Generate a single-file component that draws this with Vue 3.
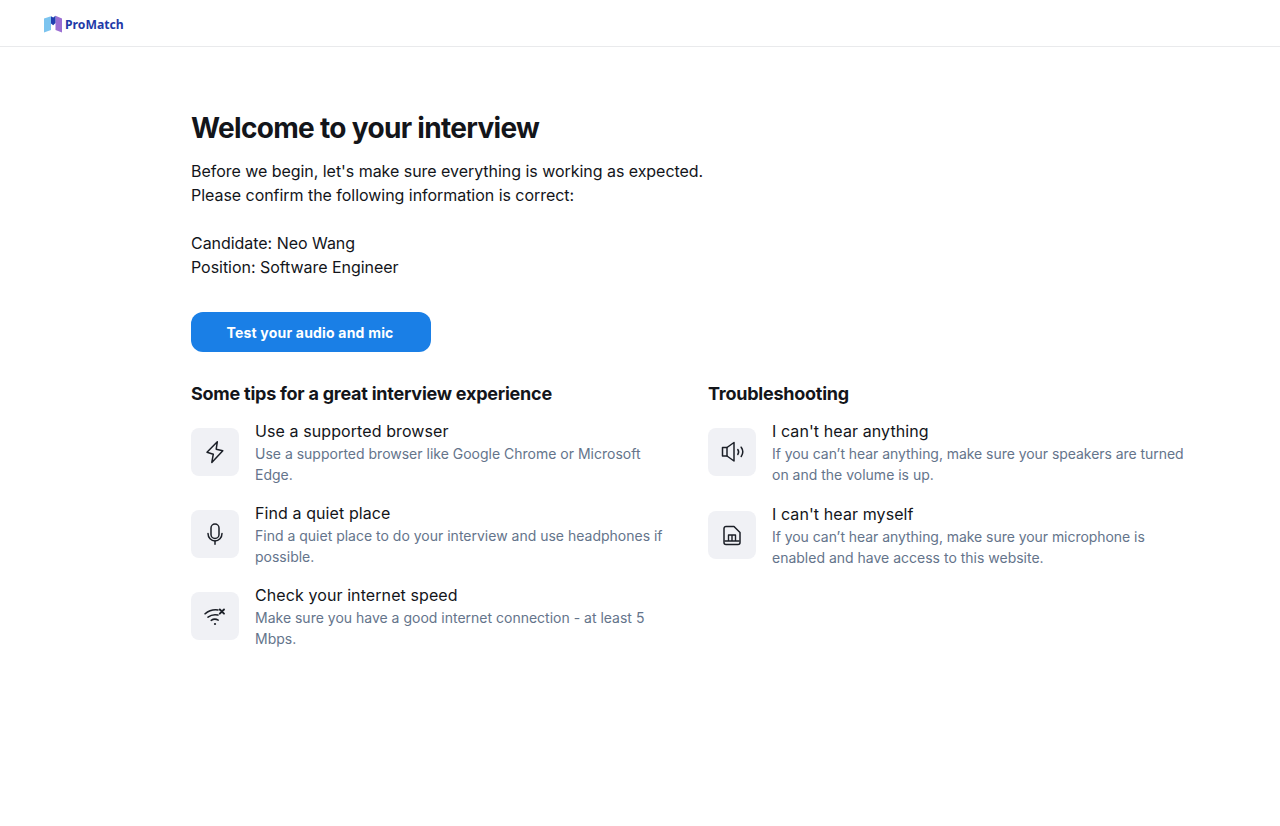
<script setup>
const tips = [
  { icon: 'bolt', title: 'Use a supported browser', text: 'Use a supported browser like Google Chrome or Microsoft Edge.' },
  { icon: 'mic', title: 'Find a quiet place', text: 'Find a quiet place to do your interview and use headphones if possible.' },
  { icon: 'wifi', title: 'Check your internet speed', text: 'Make sure you have a good internet connection - at least 5 Mbps.' }
]

const fixes = [
  { icon: 'speaker', title: "I can't hear anything", text: 'If you can’t hear anything, make sure your speakers are turned on and the volume is up.' },
  { icon: 'sim', title: "I can't hear myself", text: 'If you can’t hear anything, make sure your microphone is enabled and have access to this website.' }
]

const columns = [
  { heading: 'Some tips for a great interview experience', items: tips },
  { heading: 'Troubleshooting', items: fixes }
]
</script>

<template>
  <div class="page">
    <header class="topbar">
      <svg class="logo" width="18" height="18" viewBox="0 0 18 18">
        <path d="M0 3.5 L7 1.2 V15 L0 17.5 Z" fill="#7cc4ef" />
        <path d="M18 3.5 L11.5 0.8 V15 L18 17.5 Z" fill="#9b6fd3" />
        <path d="M7 1.2 L9.2 2.4 L11.5 0.8 V8 L9.2 10.2 L7 8.4 Z" fill="#1f3fb0" />
      </svg>
      <span class="brand">ProMatch</span>
    </header>

    <main class="content">
      <h1>Welcome to your interview</h1>
      <p class="intro">Before we begin, let's make sure everything is working as expected.<br />Please confirm the following information is correct:</p>
      <p class="intro details">Candidate: Neo Wang<br />Position: Software Engineer</p>
      <button class="test-btn">Test your audio and mic</button>

      <div class="columns">
        <section v-for="col in columns" :key="col.heading" class="column">
          <h2>{{ col.heading }}</h2>
          <div v-for="item in col.items" :key="item.title" class="item">
            <div class="icon-box">
              <svg width="24" height="24" viewBox="0 0 24 24" fill="none" stroke="#1b1f27" stroke-width="1.5" stroke-linecap="round" stroke-linejoin="round">
                <template v-if="item.icon === 'bolt'">
                  <path d="M14.3 1.8 L4 12.2 L10.3 14.2 L8.8 22.4 L19.8 10.8 L13.2 9.2 Z" />
                </template>
                <template v-else-if="item.icon === 'mic'">
                  <rect x="8" y="2" width="8" height="14.5" rx="4" />
                  <path d="M5 11.5 A7 7.5 0 0 0 19 11.5" />
                  <path d="M12 19 V22.2" />
                </template>
                <template v-else-if="item.icon === 'wifi'">
                  <path d="M2 9.8 C6 6.5 10.5 5.4 15 6" />
                  <path d="M5 13.2 C8 10.8 11.5 10.2 15 11" />
                  <path d="M8.2 16.4 C10.2 15 13 14.8 15.2 16.2" />
                  <path d="M12 20 H12.01" stroke-width="2.2" />
                  <path d="M16.8 5.5 L21 9.7 M21 5.5 L16.8 9.7" stroke-width="1.9" />
                </template>
                <template v-else-if="item.icon === 'speaker'">
                  <path d="M2.5 7.5 H7 L14 2.5 V21 L7 16 H2.5 Z" />
                  <path d="M7 7.5 V16" />
                  <path d="M17.8 9.5 C18.8 11 18.8 13 17.8 14.5" />
                  <path d="M21.2 7.2 C23.2 10 23.2 13.5 21.2 16.5" />
                </template>
                <template v-else>
                  <path d="M6 3.5 H14 L20 9.5 V19.5 A2 2 0 0 1 18 21.5 H6 A2 2 0 0 1 4 19.5 V5.5 A2 2 0 0 1 6 3.5 Z" />
                  <path d="M8.5 18 V12 H15.5 V18 M12 12 V18 M5 18 H19" stroke-width="1.4" />
                </template>
              </svg>
            </div>
            <div class="item-body">
              <div class="item-title">{{ item.title }}</div>
              <div class="item-text">{{ item.text }}</div>
            </div>
          </div>
        </section>
      </div>
    </main>
  </div>
</template>

<style>
body {
  background: #fff;
}
</style>

<style scoped>
.page {
  font-family: Inter, "Liberation Sans", sans-serif;
  color: #13151a;
  min-height: 826px;
}

.topbar {
  height: 44px;
  border-bottom: 1px solid #e9eaec;
  display: flex;
  align-items: center;
  padding-left: 44px;
  padding-top: 2px;
}

.logo {
  margin-right: 3px;
}

.brand {
  font-family: "Noto Sans", sans-serif;
  font-size: 12.2px;
  font-weight: 700;
  color: #1f3aa8;
}

.content {
  padding: 63px 0 0 191px;
}

h1 {
  margin: 0 0 13px;
  font-size: 28px;
  line-height: 36px;
  font-weight: 700;
  letter-spacing: -0.68px;
}

.intro {
  margin: 0;
  font-size: 16px;
  line-height: 24px;
  letter-spacing: -0.04px;
}

.details {
  margin-top: 24px;
}

.test-btn {
  display: block;
  margin-top: 33px;
  width: 240px;
  height: 40px;
  padding: 0 8px 0 6px;
  border: none;
  border-radius: 12px;
  background: #1a7fe6;
  color: #fff;
  font-family: inherit;
  font-size: 14px;
  font-weight: 700;
  letter-spacing: 0.2px;
}

.columns {
  display: grid;
  grid-template-columns: 477px 485px;
  column-gap: 40px;
  margin-top: 29px;
}

h2 {
  margin: 0 0 14px;
  font-size: 18px;
  line-height: 26px;
  font-weight: 700;
  letter-spacing: -0.24px;
}

.item {
  display: flex;
  gap: 16px;
  margin-bottom: 18px;
}

.column + .column .item {
  margin-bottom: 18.5px;
}

.icon-box {
  flex: none;
  width: 48px;
  height: 48px;
  margin-top: 7px;
  border-radius: 8px;
  background: #f0f1f5;
  display: flex;
  align-items: center;
  justify-content: center;
}

.item-title {
  font-size: 16px;
  line-height: 21px;
  font-weight: 400;
  letter-spacing: 0.09px;
}

.item-text {
  margin-top: 1px;
  font-size: 14px;
  line-height: 21px;
  color: #64748b;
}

.column + .column .item-text::first-line {
  letter-spacing: -0.05px;
}
</style>
